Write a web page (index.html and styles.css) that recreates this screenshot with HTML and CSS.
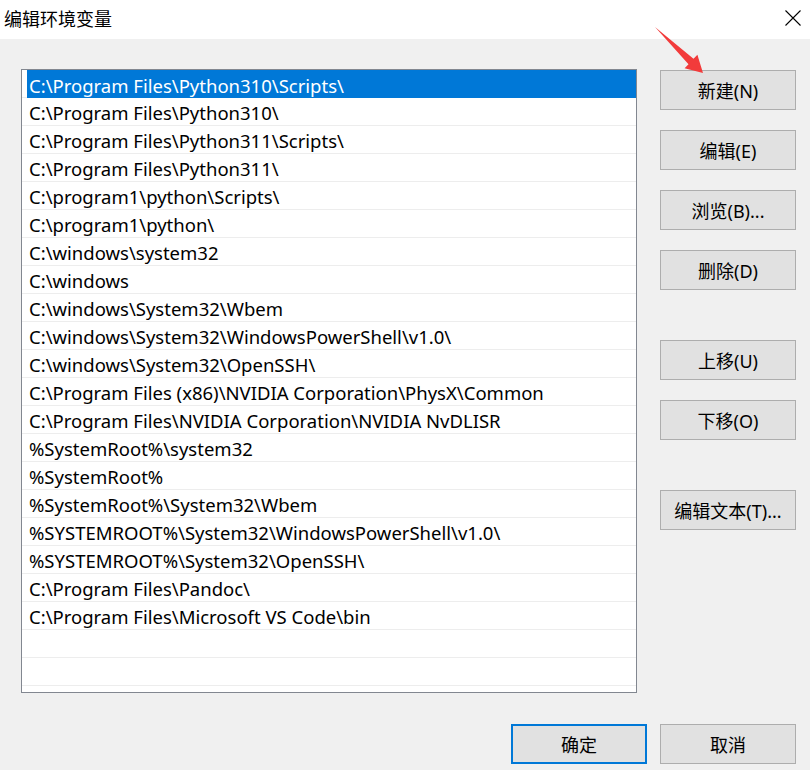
FILE: index.html
```html
<!DOCTYPE html>
<html lang="zh-CN">
<head>
    <meta charset="UTF-8">
    <meta name="viewport" content="width=device-width, initial-scale=1.0">
    <title>编辑环境变量</title>
    <link rel="stylesheet" href="styles.css">
</head>
<body>
    <div class="dialog">
        <div class="title-bar">
            <span class="title">编辑环境变量</span>
            <svg class="close" width="16" height="16" viewBox="0 0 16 16">
                <path d="M0.5 0.5 L15.5 15.5 M15.5 0.5 L0.5 15.5" stroke="#000" stroke-width="1.1" fill="none"/>
            </svg>
        </div>

        <svg class="arrow" width="60" height="56" viewBox="0 0 60 56">
            <polygon points="5,5 43.5,36.8 47.4,32.8 53,51 34.6,46.2 38.5,42.2" fill="#f23b3b"/>
        </svg>

        <div class="content">
            <div class="main">
                <div class="path-list">
                    <div class="row selected"><span class="cell">C:\Program Files\Python310\Scripts\</span></div>
                    <div class="row"><span class="cell">C:\Program Files\Python310\</span></div>
                    <div class="row"><span class="cell">C:\Program Files\Python311\Scripts\</span></div>
                    <div class="row"><span class="cell">C:\Program Files\Python311\</span></div>
                    <div class="row"><span class="cell">C:\program1\python\Scripts\</span></div>
                    <div class="row"><span class="cell">C:\program1\python\</span></div>
                    <div class="row"><span class="cell">C:\windows\system32</span></div>
                    <div class="row"><span class="cell">C:\windows</span></div>
                    <div class="row"><span class="cell">C:\windows\System32\Wbem</span></div>
                    <div class="row"><span class="cell">C:\windows\System32\WindowsPowerShell\v1.0\</span></div>
                    <div class="row"><span class="cell">C:\windows\System32\OpenSSH\</span></div>
                    <div class="row"><span class="cell">C:\Program Files (x86)\NVIDIA Corporation\PhysX\Common</span></div>
                    <div class="row"><span class="cell">C:\Program Files\NVIDIA Corporation\NVIDIA NvDLISR</span></div>
                    <div class="row"><span class="cell">%SystemRoot%\system32</span></div>
                    <div class="row"><span class="cell">%SystemRoot%</span></div>
                    <div class="row"><span class="cell">%SystemRoot%\System32\Wbem</span></div>
                    <div class="row"><span class="cell">%SYSTEMROOT%\System32\WindowsPowerShell\v1.0\</span></div>
                    <div class="row"><span class="cell">%SYSTEMROOT%\System32\OpenSSH\</span></div>
                    <div class="row"><span class="cell">C:\Program Files\Pandoc\</span></div>
                    <div class="row"><span class="cell">C:\Program Files\Microsoft VS Code\bin</span></div>
                    <div class="row"><span class="cell"></span></div>
                    <div class="row"><span class="cell"></span></div>
                </div>

                <div class="side">
                    <div class="btn-group">
                        <button class="btn">新建(N)</button>
                        <button class="btn">编辑(E)</button>
                        <button class="btn">浏览(B)...</button>
                        <button class="btn">删除(D)</button>
                    </div>
                    <div class="btn-group">
                        <button class="btn">上移(U)</button>
                        <button class="btn">下移(O)</button>
                    </div>
                    <div class="btn-group">
                        <button class="btn">编辑文本(T)...</button>
                    </div>
                </div>
            </div>

            <div class="footer">
                <button class="btn default">确定</button>
                <button class="btn">取消</button>
            </div>
        </div>
    </div>
</body>
</html>
```

FILE: styles.css
```css
body {
    margin: 0;
    padding: 0;
    font-family: "Noto Sans", "Noto Sans CJK SC", sans-serif;
    font-size: 18px;
    color: #000;
    background-color: #f0f0f0;
}

.dialog {
    position: relative;
    width: 810px;
    height: 770px;
    overflow: hidden;
}

.title-bar {
    display: flex;
    justify-content: space-between;
    align-items: center;
    height: 39px;
    padding: 0 9px 4px 4px;
    box-sizing: border-box;
    background-color: #fff;
}

.title {
    font-family: "Noto Sans CJK SC", sans-serif;
    font-size: 18px;
}

.close {
    display: block;
}

.arrow {
    position: absolute;
    left: 650px;
    top: 22px;
}

.content {
    padding: 30px 14px 0 21px;
}

.main {
    display: flex;
    gap: 23px;
}

.path-list {
    width: 616px;
    height: 624px;
    box-sizing: border-box;
    border: 1px solid #828790;
    background-color: #fff;
    padding-top: 1px;
    overflow: hidden;
}

.row {
    height: 27px;
    border-bottom: 1px solid #ededed;
}

.cell {
    display: block;
    height: 27px;
    line-height: 29px;
    margin-left: 5px;
    padding-left: 2px;
    font-size: 18.5px;
    white-space: nowrap;
}

.row.selected .cell {
    height: 28px;
    margin-top: -1px;
    line-height: 31px;
    background-color: #0078d7;
    color: #fff;
}

.side {
    display: flex;
    flex-direction: column;
    gap: 50px;
    padding-top: 1px;
}

.btn-group {
    display: flex;
    flex-direction: column;
    gap: 20px;
}

.btn {
    width: 136px;
    height: 40px;
    padding: 0;
    border: 1px solid #adadad;
    background-color: #e1e1e1;
    font-family: "Noto Sans", "Noto Sans CJK SC", sans-serif;
    font-size: 18px;
    color: #000;
}

.btn.default {
    border: 2px solid #0078d7;
}

.footer {
    display: flex;
    justify-content: flex-end;
    gap: 13px;
    margin-top: 31px;
}
```
